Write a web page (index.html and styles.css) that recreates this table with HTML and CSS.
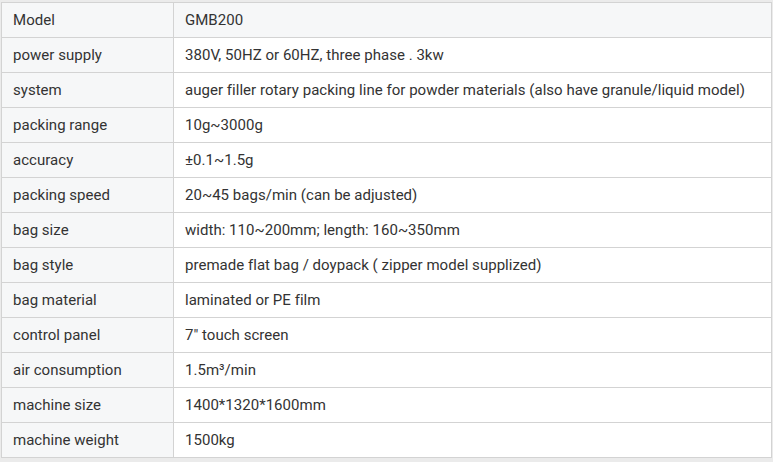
FILE: index.html
```html
<!DOCTYPE html>
<html>
<head>
<meta charset="utf-8">
<link rel="stylesheet" href="styles.css">
</head>
<body>
<table class="spec">
<tr class="head"><td class="k">Model</td><td class="v">GMB200</td></tr>
<tr><td class="k">power supply</td><td class="v">380V, 50HZ or 60HZ, three phase . 3kw</td></tr>
<tr><td class="k">system</td><td class="v">auger filler rotary packing line for powder materials (also have granule/liquid model)</td></tr>
<tr><td class="k">packing range</td><td class="v">10g~3000g</td></tr>
<tr><td class="k">accuracy</td><td class="v">±0.1~1.5g</td></tr>
<tr><td class="k">packing speed</td><td class="v">20~45 bags/min (can be adjusted)</td></tr>
<tr><td class="k">bag size</td><td class="v">width: 110~200mm; length: 160~350mm</td></tr>
<tr><td class="k">bag style</td><td class="v">premade flat bag / doypack ( zipper model supplized)</td></tr>
<tr><td class="k">bag material</td><td class="v">laminated or PE film</td></tr>
<tr><td class="k">control panel</td><td class="v">7" touch screen</td></tr>
<tr><td class="k">air consumption</td><td class="v">1.5m³/min</td></tr>
<tr><td class="k">machine size</td><td class="v">1400*1320*1600mm</td></tr>
<tr><td class="k">machine weight</td><td class="v">1500kg</td></tr>
</table>
</body>
</html>
```
FILE: styles.css
```css
html, body {
  margin: 0;
  padding: 0;
  background: #ebebeb;
}
body {
  padding: 2px 0 0 1px;
  font-family: Roboto, "Liberation Sans", sans-serif;
  font-size: 15px;
  letter-spacing: 0.03px;
  color: #333;
}
.spec {
  border-collapse: collapse;
  width: 771px;
  background: #fff;
}
.spec td {
  border: 1px solid #d3d3d3;
  height: 35px;
  padding: 0 11px;
  box-sizing: border-box;
  vertical-align: middle;
  white-space: nowrap;
}
.spec td.k {
  width: 172px;
  background: #f6f7f8;
}
.spec tr.head td {
  background: #f6f7f8;
}
```
